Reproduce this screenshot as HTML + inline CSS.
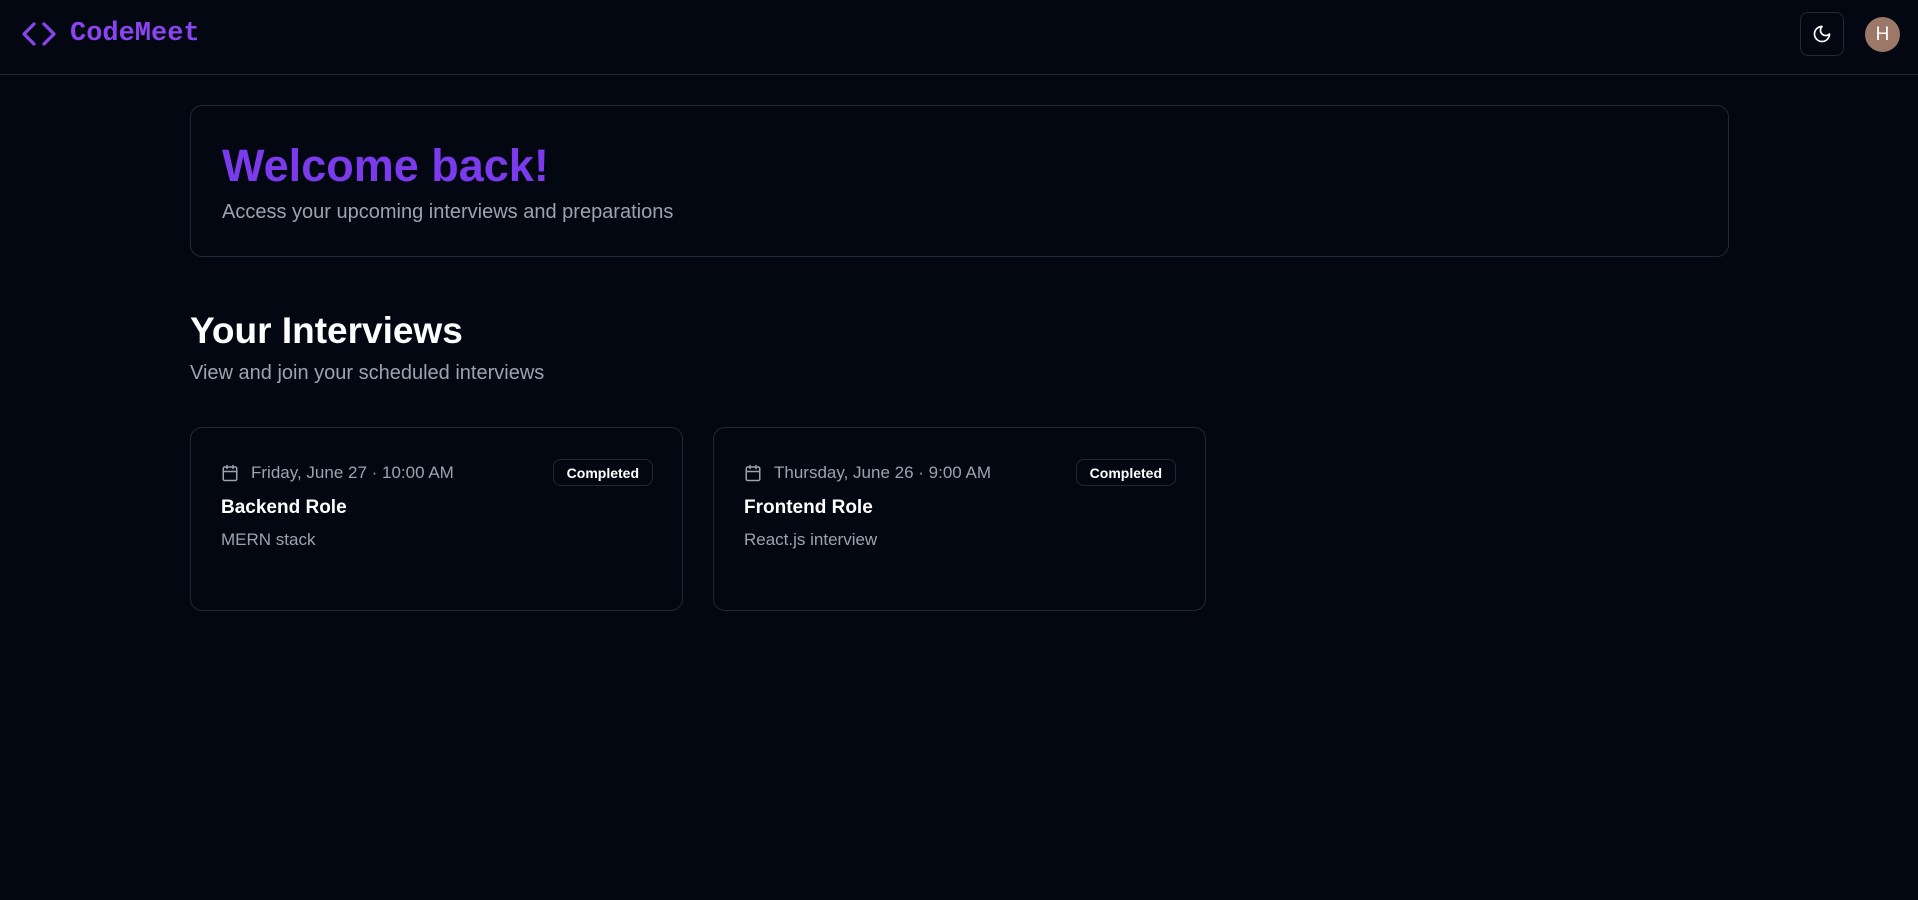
<!DOCTYPE html>
<html><head><meta charset="utf-8"><style>
*{box-sizing:border-box;margin:0;padding:0}
body{width:1918px;height:900px;background:#030712;font-family:"Liberation Sans",sans-serif;color:#f9fafb;position:relative;overflow:hidden}
.hdr{position:absolute;left:0;top:0;width:1918px;height:75px;border-bottom:1px solid #1f2937}
.logo{position:absolute;left:20px;top:19px;display:flex;align-items:center}
.logo span{font-family:"Liberation Mono",monospace;font-weight:bold;font-size:27px;color:#8b45f0;margin-left:12px}
.btn{position:absolute;left:1800px;top:12px;width:44px;height:44px;border:1px solid #1f2937;border-radius:8px;display:flex;align-items:center;justify-content:center}
.av{position:absolute;left:1865px;top:17px;width:35px;height:35px;border-radius:50%;background:#9c7868;color:#fff;font-size:19px;display:flex;align-items:center;justify-content:center}
.wc{position:absolute;left:190px;top:105px;width:1539px;height:152px;border:1px solid #1f2937;border-radius:12px}
.wc h1{position:absolute;left:31px;top:34px;font-size:45px;font-weight:bold;color:#7c3aed}
.wc p{position:absolute;left:31px;top:95px;font-size:20px;color:#9ca3af}
h2{position:absolute;left:190px;top:310px;font-size:37px;font-weight:bold;color:#fff}
.sub{position:absolute;left:190px;top:362px;font-size:20px;color:#9ca3af}
.card{position:absolute;top:427px;width:493px;height:184px;border:1px solid #1f2937;border-radius:12px}
.date{position:absolute;left:30px;top:35px;display:flex;align-items:center;font-size:17px;color:#9ca3af}
.date svg{margin-right:12px}
.badge{position:absolute;right:29px;top:31px;height:27px;padding:0 13px;border:1px solid #1f2937;border-radius:8px;font-size:14px;font-weight:bold;color:#fff;display:flex;align-items:center}
.t{position:absolute;left:30px;top:69px;font-size:19px;font-weight:bold;color:#fff}
.d{position:absolute;left:30px;top:102px;font-size:17px;color:#9ca3af}
</style></head><body>
<div class="hdr">
<div class="logo"><svg width="38" height="30" viewBox="0 0 38 30" fill="none" stroke="#8b45f0" stroke-width="3.2" stroke-linecap="round" stroke-linejoin="round"><path d="M14 5L4 15l10 10M24 5l10 10-10 10"/></svg><span>CodeMeet</span></div>
<div class="btn"><svg width="20" height="20" viewBox="0 0 24 24" fill="none" stroke="#fff" stroke-width="2" stroke-linecap="round" stroke-linejoin="round"><path d="M12 3a6 6 0 0 0 9 9 9 9 0 1 1-9-9Z"/></svg></div>
<div class="av">H</div>
</div>
<div class="wc"><h1>Welcome back!</h1><p>Access your upcoming interviews and preparations</p></div>
<h2>Your Interviews</h2>
<div class="sub">View and join your scheduled interviews</div>
<div class="card" style="left:190px">
<div class="date"><svg width="18" height="18" viewBox="0 0 24 24" fill="none" stroke="#9ca3af" stroke-width="2" stroke-linecap="round"><rect x="3" y="4" width="18" height="18" rx="2"/><path d="M16 2v4M8 2v4M3 10h18"/></svg>Friday, June 27 · 10:00 AM</div>
<div class="badge">Completed</div>
<div class="t">Backend Role</div><div class="d">MERN stack</div>
</div>
<div class="card" style="left:713px">
<div class="date"><svg width="18" height="18" viewBox="0 0 24 24" fill="none" stroke="#9ca3af" stroke-width="2" stroke-linecap="round"><rect x="3" y="4" width="18" height="18" rx="2"/><path d="M16 2v4M8 2v4M3 10h18"/></svg>Thursday, June 26 · 9:00 AM</div>
<div class="badge">Completed</div>
<div class="t">Frontend Role</div><div class="d">React.js interview</div>
</div>
</body></html>
